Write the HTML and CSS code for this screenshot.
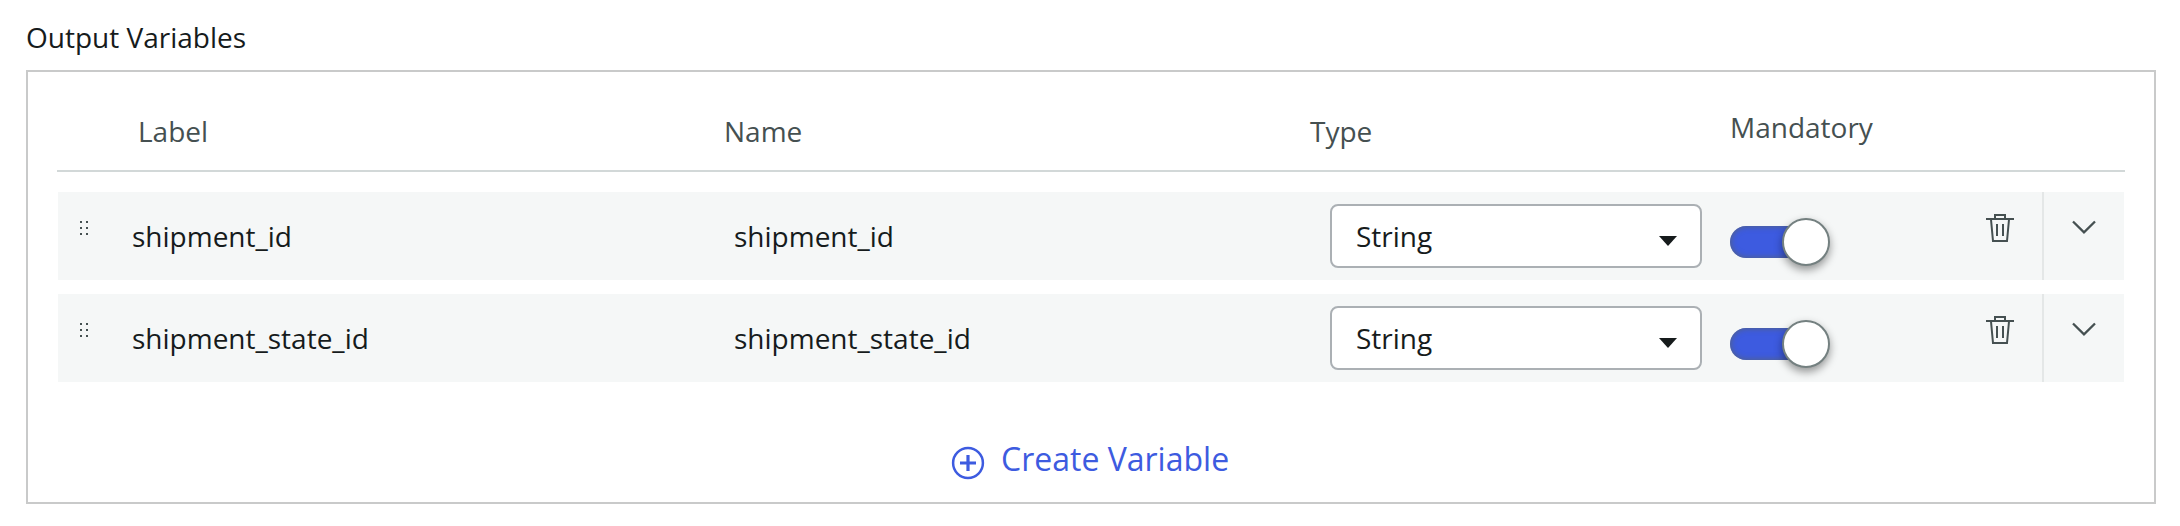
FILE: index.html
```html
<!DOCTYPE html>
<html lang="en">
<head>
<meta charset="utf-8">
<title>Output Variables</title>
<link rel="stylesheet" href="styles.css">
</head>
<body>
<svg class="sprite" aria-hidden="true">
  <symbol id="grip" viewBox="0 0 8 14"><path d="M0 0h2v2H0zM6 0h2v2H6zM0 6h2v2H0zM6 6h2v2H6zM0 12h2v2H0zM6 12h2v2H6z" fill="currentColor"/></symbol>
  <symbol id="trash" viewBox="0 0 28 28"><g fill="none" stroke="currentColor" stroke-width="2"><path d="M0 5h28M9 5V1h10v4M5 5.500 7 27h14l2-21.500M11 10v12M17 10v12"/></g></symbol>
  <symbol id="chevron" viewBox="0 0 24 14"><path d="M1 1.500 12 12.300 23 1.500" fill="none" stroke="currentColor" stroke-width="2.300"/></symbol>
  <symbol id="caret" viewBox="0 0 18 10"><path d="M0 0h18L9 10z" fill="currentColor"/></symbol>
</svg>
<main class="page">
  <h1 class="title">Output Variables</h1>
  <section class="panel">
    <header class="head">
      <span>Label</span><span>Name</span><span>Type</span><span class="head-mandatory">Mandatory</span>
    </header>
    <div class="rows">
      <div class="row">
        <svg class="grip"><use href="#grip"/></svg>
        <span class="text">shipment_id</span>
        <span class="text">shipment_id</span>
        <div class="select"><span>String</span><svg class="caret"><use href="#caret"/></svg></div>
        <div class="toggle"><span class="knob"></span></div>
        <svg class="trash"><use href="#trash"/></svg>
        <div class="expand"><svg class="chevron"><use href="#chevron"/></svg></div>
      </div>
      <div class="row">
        <svg class="grip"><use href="#grip"/></svg>
        <span class="text">shipment_state_id</span>
        <span class="text">shipment_state_id</span>
        <div class="select"><span>String</span><svg class="caret"><use href="#caret"/></svg></div>
        <div class="toggle"><span class="knob"></span></div>
        <svg class="trash"><use href="#trash"/></svg>
        <div class="expand"><svg class="chevron"><use href="#chevron"/></svg></div>
      </div>
    </div>
    <div class="create">
      <svg class="plus" viewBox="0 0 34 34"><circle cx="17" cy="17" r="14.900" fill="none" stroke="currentColor" stroke-width="2.500"/><path d="M9 17h16M17 9v16" stroke="currentColor" stroke-width="3.200"/></svg>
      <span>Create Variable</span>
    </div>
  </section>
</main>
</body>
</html>
```
FILE: styles.css
```css
* { box-sizing: border-box; }
body {
  margin: 0;
  background: #fff;
  color: #161b1c;
  font: 28px/38px "Open Sans", "Noto Sans", sans-serif;
}
svg { display: block; }
.sprite { position: absolute; width: 0; height: 0; }
.page { padding: 18px 24px 22px 26px; }
.title { margin: 0 0 14px; font-size: 28px; font-weight: 400; }
.panel { height: 434px; border: 2px solid #c9caca; }
.head {
  display: grid;
  grid-template-columns: 586px 586px 420px 1fr;
  height: 100px;
  margin: 0 29px;
  padding: 40px 0 0 81px;
  border-bottom: 2px solid #d2d8d8;
  color: #455051;
}
.head-mandatory { margin-top: -4px; }
.rows { display: flex; flex-direction: column; gap: 14px; margin: 20px 30px 0; }
.row {
  display: grid;
  grid-template-columns: 74px 602px 596px 400px 256px 56px 1fr;
  height: 88px;
  background: #f5f7f7;
}
.grip { width: 8px; height: 14px; margin: 29px 0 0 22px; color: #455051; }
.text { padding-top: 25px; }
.select {
  display: flex;
  justify-content: space-between;
  width: 372px;
  height: 64px;
  margin-top: 12px;
  padding: 11px 23px 0 24px;
  background: #fff;
  border: 2px solid #abb0b4;
  border-radius: 8px;
}
.caret { width: 18px; height: 10px; margin-top: 19px; }
.toggle {
  width: 98px;
  height: 32px;
  margin-top: 34px;
  padding-left: 52px;
  border-radius: 16px;
  background: #3d5be0;
  box-shadow: inset 0 0 6px rgba(90, 100, 100, 0.9);
}
.knob {
  display: block;
  width: 48px;
  height: 48px;
  margin-top: -8px;
  background: #fff;
  border: 2px solid #748080;
  border-radius: 50%;
  box-shadow: 0 4px 8px rgba(0, 0, 0, 0.4);
}
.trash { width: 28px; height: 28px; margin-top: 22px; color: #455051; }
.expand { border-left: 2px solid #e4e7e7; padding: 28px 0 0 28px; color: #455051; }
.chevron { width: 24px; height: 14px; }
.create {
  display: flex;
  align-items: flex-start;
  gap: 16px;
  margin: 55px 0 0 923px;
  color: #3d5be0;
  font-size: 32px;
  line-height: 44px;
}
.plus { width: 34px; height: 34px; margin-top: 9px; }
```
